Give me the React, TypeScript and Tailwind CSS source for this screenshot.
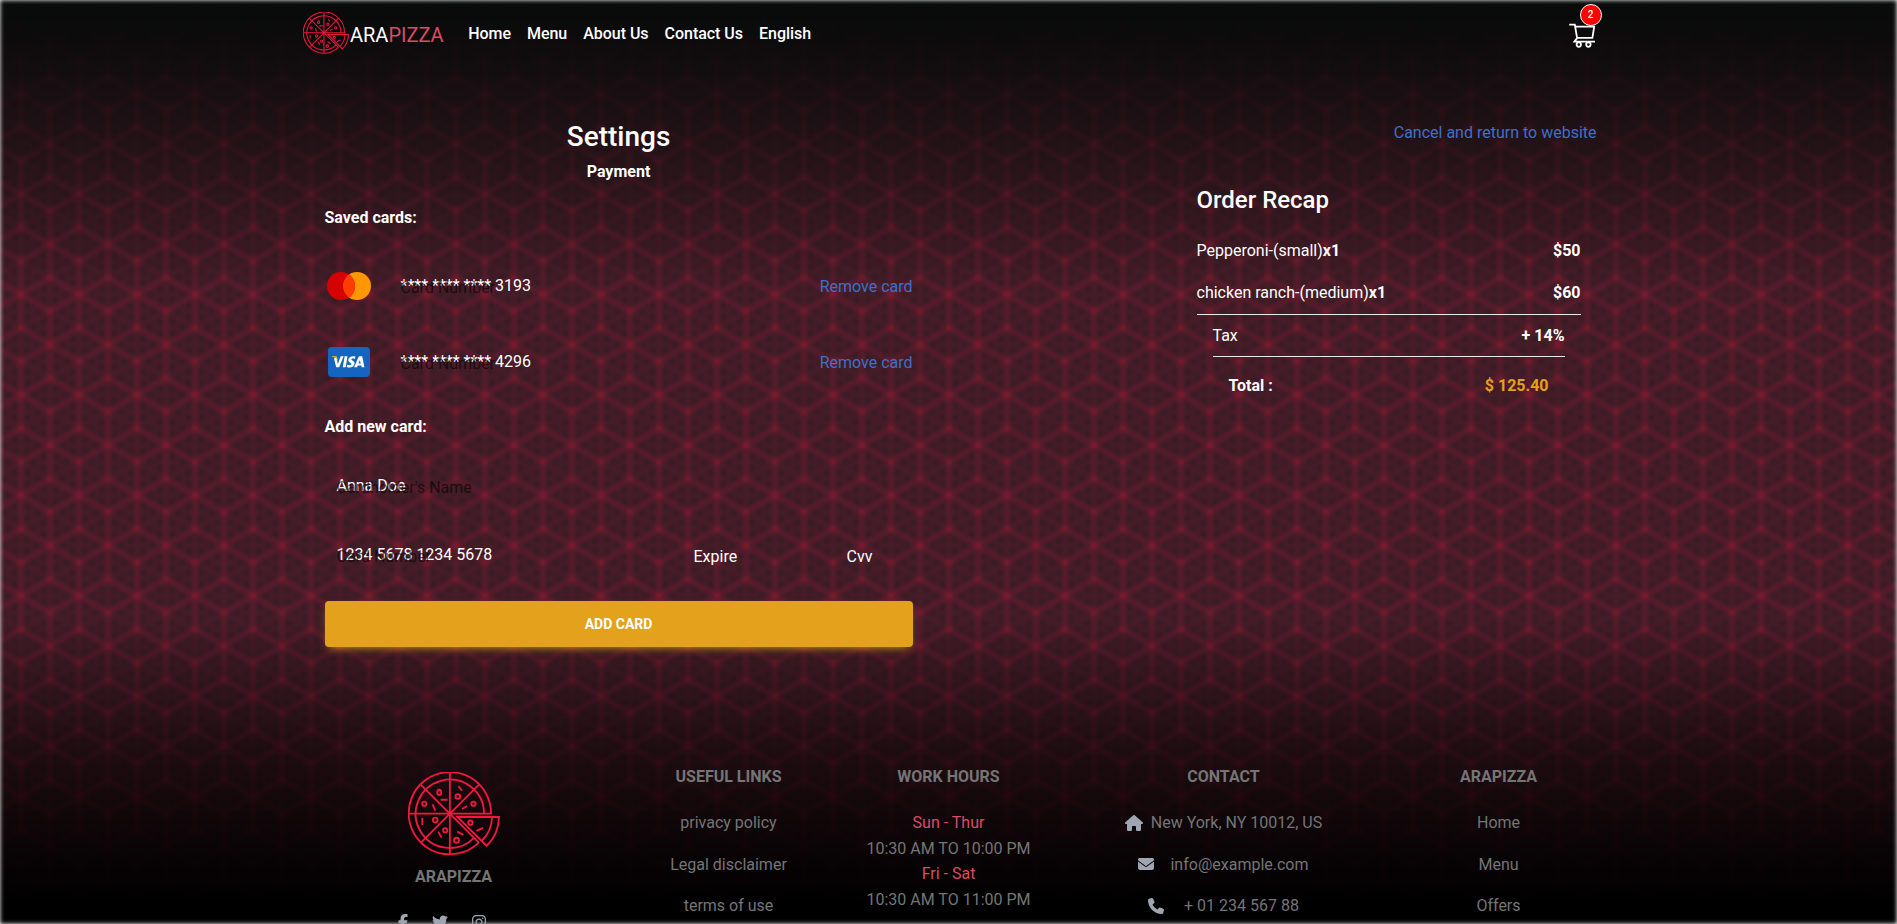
import React from "react";
import { FaEnvelope, FaFacebookF, FaHouse, FaInstagram, FaPhone, FaTwitter } from "react-icons/fa6";

const W = 58;
const H = 100.46;
const EDGE = 33.49;

/** Six-way lattice points that can touch one repeat of the pattern. */
const hubs: [number, number][] = [
  [0, 0],
  [W, 0],
  [0, H],
  [W, H],
  [W / 2, H / 2],
  [-W / 2, H / 2],
  [(3 * W) / 2, H / 2],
];

const spokes: [number, number][] = [0, 1, 2, 3, 4, 5].map((i) => {
  const a = ((90 + i * 60) * Math.PI) / 180;
  return [EDGE * Math.cos(a), EDGE * Math.sin(a)];
});

function Lattice() {
  return (
    <svg className="absolute inset-0 h-full w-full" aria-hidden="true">
      <defs>
        <pattern id="lattice" width={W} height={H} patternUnits="userSpaceOnUse" x={21} y={394.9}>
          <rect width={W} height={H} fill="#431c26" />
          {hubs.map(([x, y], h) => (
            <g key={h} transform={`translate(${x} ${y})`}>
              {spokes.map(([sx, sy], i) => {
                const [nx, ny] = spokes[(i + 1) % 6];
                return (
                  <g key={i}>
                    {[
                      [0.58, 0.21],
                      [0.21, 0.58],
                      [0.22, 0.22],
                    ].map(([a, b], k) => (
                      <circle key={k} cx={sx * a + nx * b} cy={sy * a + ny * b} r={1.6} fill="#171a1b" />
                    ))}
                    <path d={`M${sx} ${sy}L${nx} ${ny}`} stroke="#4c1c2a" strokeWidth={1} />
                    <path d={`M0 0L${sx} ${sy}`} stroke="#701a31" strokeWidth={2.4} />
                    <circle cx={sx} cy={sy} r={2.3} fill="#961a2c" />
                  </g>
                );
              })}
              <circle r={2.4} fill="#981a2c" />
            </g>
          ))}
        </pattern>
      </defs>
      <rect width="100%" height="100%" fill="url(#lattice)" />
    </svg>
  );
}

function PizzaLogo({ className }: { className: string }) {
  return (
    <svg viewBox="54 64.5 277 253" className={className} fill="none" stroke="currentColor">
      <path d="M304 190A124 124 0 1 0 267 277" />
      <path d="M283 190A103 103 0 1 0 253 263" />
      <path d="M57 190H306M180 67V314M93 103L268 278M93 277L267 103" />
      <path d="M203 200H328A124 124 0 0 1 291 287ZM307 200A103 103 0 0 1 276 272" />
      <ellipse cx="148" cy="126" rx="6" ry="8" />
      <circle cx="103" cy="160" r="6.5" />
      <circle cx="204" cy="138" r="7" />
      <circle cx="251" cy="160" r="6.5" />
      <circle cx="242" cy="217" r="6.5" />
      <circle cx="136" cy="209" r="7" />
      <circle cx="166" cy="240" r="6.5" />
      <circle cx="200" cy="270" r="7.5" />
      <path d="M152 148H173M128 162L136 181M97 203V224M145 244L155 262M202 244L221 254M206 107L217 121M217 176L232 167M260 242L280 233" />
    </svg>
  );
}

function CartIcon() {
  return (
    <svg viewBox="0 0 27 26" className="h-[26px] w-[27px]" fill="none" stroke="#fff" strokeWidth={1.8}>
      <path d="M0.2 1.7H5.8L8.2 15.6M6.2 3.6H25.2L23.4 14.9H8.2L5.4 18.6H26" />
      <circle cx="9.8" cy="21.6" r="2.2" />
      <circle cx="19.4" cy="21.6" r="2.2" />
    </svg>
  );
}

function Mastercard() {
  return (
    <svg viewBox="0 0 48 48" className="h-12 w-12">
      <circle cx="32" cy="24" r="14" fill="#ff9800" />
      <circle cx="16" cy="24" r="14" fill="#d50000" />
      <path fill="#ff3d00" d="M18 24c0 4.755 2.376 8.95 6 11.48 3.624-2.53 6-6.725 6-11.48s-2.376-8.95-6-11.48c-3.624 2.53-6 6.725-6 11.48z" />
    </svg>
  );
}

function Visa() {
  return (
    <div className="mx-[3px] flex h-[30px] w-[42px] items-center justify-center rounded-[4px] bg-[#1565c0]">
      <svg viewBox="0 0 36 14" className="h-[14px] w-[36px]">
        <path fill="#fff" d="M3 3.4 5.2 12.3H8.2L12.6 1.3H9.7L6.8 8.9 5.6 2.4zM13.6 1.3h2.9l-1.8 11h-2.9zM24.4 1.6l-.4 2.3c-2.100-.9-3.700-.5-3.700.4 0 1.300 3.300 1.500 3.200 4.200-.1 3.600-4.500 4.700-7.700 3.400l.5-2.500c2.100 1 4.100.8 4.100-.3 0-1.300-3.200-1.300-3.100-4 .1-3.300 4.100-4.500 7.100-3.500zM31.200 1.300h-2.300c-.8 0-1.300.4-1.600 1.100l-4.200 9.900h3l.6-1.700h3.600l.4 1.700h2.700zM28.900 4.900l.8 3.500h-2.200z" />
        <path fill="#ffc107" d="M0.900 1.300h3.900c.7 0 1.100.3 1.300 1l.6 3.100C5.500 3.200 3.500 2.200.900 1.800z" />
      </svg>
    </div>
  );
}

function Field({ value, label, className = "" }: { value: string; label: string; className?: string }) {
  return (
    <div className={`relative h-6 ${className}`}>
      <span>{value}</span>
      <span className="absolute left-0 top-[2px] whitespace-nowrap text-black/60">{label}</span>
    </div>
  );
}

function SavedCard({ icon, digits }: { icon: React.ReactNode; digits: string }) {
  return (
    <div className="flex h-[76px] items-center">
      {icon}
      <Field value={`**** **** **** ${digits}`} label="Card Number" className="ml-7 -mt-px" />
      <a className="ml-auto pt-px text-[#3b71ca]">Remove card</a>
    </div>
  );
}

function FooterColumn({ title, children, className }: { title: string; children: React.ReactNode; className: string }) {
  return (
    <div className={`flex flex-col items-center ${className}`}>
      <h6 className="mb-5 font-bold leading-[26px]">{title}</h6>
      {children}
    </div>
  );
}

function Row({ children }: { children: React.ReactNode }) {
  return <p className="mb-4 flex items-center leading-[25.6px]">{children}</p>;
}

export default function App() {
  return (
    <div className="relative h-[924px] overflow-hidden bg-white font-['Roboto',sans-serif] text-base leading-6 text-white">
      <div className="absolute inset-0 blur-[2px]">
        <Lattice />
        <div className="absolute inset-0 bg-[linear-gradient(to_bottom,#080a0a_0%,#080a0aee_4%,#080a0a90_15%,#080a0a00_31%,#00000000_67%,#00000088_81%,#000000dc_92%,#000_98%)]" />
      </div>

      <div className="relative mx-auto w-[1320px]">
        <header className="flex h-[67px] items-center pl-[14px] pr-[13px]">
          <a className="flex items-center">
            <PizzaLogo className="-mt-[2px] h-[42px] w-[46px] stroke-[6.5] text-[#e8173c]" />
            <span className="ml-[1.5px] mt-[2px] text-xl">
              ARA<span className="text-[#dc4c64]">PIZZA</span>
            </span>
          </a>
          <nav className="ml-[24.5px] flex gap-4 font-medium tracking-[-0.03px]">
            <a>Home</a>
            <a>Menu</a>
            <a>About Us</a>
            <a>Contact Us</a>
            <a>English</a>
          </nav>
          <div className="relative ml-auto mt-[5px]">
            <CartIcon />
            <span className="absolute -top-[19px] left-[11px] flex h-[22px] w-[22px] items-center justify-center rounded-full border border-white bg-[#ff0000] text-[10px] font-medium leading-none">
              2
            </span>
          </div>
        </header>

        <main className="flex h-[691px] px-3">
          <section className="w-[636px] px-6 pt-[53px]">
            <h3 className="text-center text-[28px] font-medium leading-[34px]">Settings</h3>
            <h6 className="mt-[6px] text-center font-bold">Payment</h6>
            <h6 className="mb-[18px] mt-[22px] font-bold">Saved cards:</h6>
            <SavedCard icon={<Mastercard />} digits="3193" />
            <SavedCard icon={<Visa />} digits="4296" />
            <h6 className="mt-[15px] font-bold">Add new card:</h6>
            <Field value="Anna Doe" label="Cardholder's Name" className="ml-3 mt-[35px]" />
            <div className="mt-[45px] flex">
              <Field value="1234 5678 1234 5678" label="Card Number" className="ml-3 w-[357px]" />
              <span className="w-[153px] pt-[2px]">Expire</span>
              <span className="pt-[2px]">Cvv</span>
            </div>
            <button className="mt-[32px] flex h-[46px] w-full items-center justify-center rounded-[4px] bg-[#e4a11b] text-sm font-bold shadow-[0_4px_9px_-4px_#e4a11b]">
              ADD CARD
            </button>
          </section>

          <section className="ml-auto flex w-[400px] flex-col pt-[54px]">
            <a className="text-right text-[#3b71ca]">Cancel and return to website</a>
            <div className="mr-4 mt-[39px]">
              <h4 className="text-2xl font-medium leading-8">Order Recap</h4>
              <div className="mt-[23px] flex justify-between">
                <p>
                  Pepperoni-(small)<b>x1</b>
                </p>
                <b>$50</b>
              </div>
              <div className="mt-[18px] flex justify-between border-b border-white/90 pb-[9px]">
                <p>
                  chicken ranch-(medium)<b>x1</b>
                </p>
                <b>$60</b>
              </div>
              <div className="mx-4 flex justify-between border-b border-white/90 pb-2 pt-[9px]">
                <p>Tax</p>
                <b>+ 14%</b>
              </div>
              <div className="mx-8 flex justify-between pt-[17px]">
                <b>Total :</b>
                <b className="text-[#e4a11b]">$ 125.40</b>
              </div>
            </div>
          </section>
        </main>

        <footer className="flex pt-[6px] text-[#757575]">
          <div className="flex w-[330px] flex-col items-center pt-2">
            <PizzaLogo className="h-[84px] w-[92px] stroke-[5.5] text-[#f5173f]" />
            <h6 className="mt-[9px] font-bold leading-6">ARAPIZZA</h6>
            <div className="mr-[25px] mt-[25px] flex items-center text-base text-[#9fa6b2]">
              <FaFacebookF className="mr-[21px]" />
              <FaTwitter className="mr-[23px]" />
              <FaInstagram />
            </div>
          </div>
          <FooterColumn title="USEFUL LINKS" className="w-[220px]">
            <Row>privacy policy</Row>
            <Row>Legal disclaimer</Row>
            <Row>terms of use</Row>
          </FooterColumn>
          <FooterColumn title="WORK HOURS" className="w-[220px]">
            <div className="text-center leading-[25.6px]">
              <p className="text-[#dc4c64]">Sun - Thur</p>
              <p>10:30 AM TO 10:00 PM</p>
              <p className="text-[#dc4c64]">Fri - Sat</p>
              <p>10:30 AM TO 11:00 PM</p>
            </div>
          </FooterColumn>
          <FooterColumn title="CONTACT" className="w-[330px]">
            <Row>
              <FaHouse className="mr-2 w-[18px] text-[#9fa6b2]" />
              New York, NY 10012, US
            </Row>
            <Row>
              <FaEnvelope className="mr-4 text-[#9fa6b2]" />
              info@example.com
            </Row>
            <Row>
              <FaPhone className="mr-5 text-[#9fa6b2]" />+ 01 234 567 88
            </Row>
          </FooterColumn>
          <FooterColumn title="ARAPIZZA" className="w-[220px]">
            <Row>Home</Row>
            <Row>Menu</Row>
            <Row>Offers</Row>
          </FooterColumn>
        </footer>
      </div>
    </div>
  );
}
